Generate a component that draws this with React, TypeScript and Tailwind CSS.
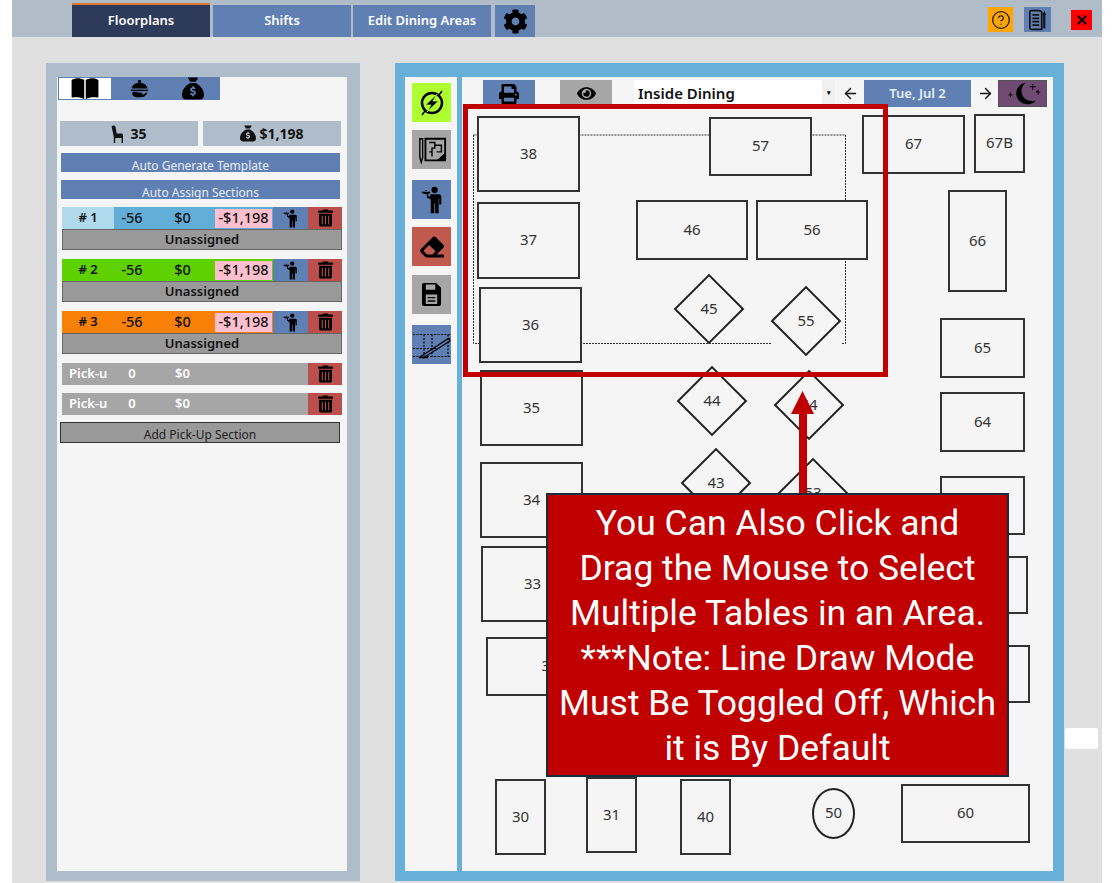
import { ArrowLeft, ArrowRight, CircleHelp, X } from "lucide-react"
import { FaCog, FaEraser, FaEye, FaPrint, FaTrashAlt } from "react-icons/fa"
import { FaSackDollar } from "react-icons/fa6"

const WaiterIcon = ({ className }: { className?: string }) => (
    <svg viewBox="0 0 24 32" className={className} fill="currentColor">
        <circle cx="15" cy="4.5" r="3.6" />
        <path d="M10 9.5h10c1.6 0 2.6 1.2 2.6 2.8V21h-2.4v-7h-.6v17h-4v-11h-1v11h-4V15.5L6 13.2l1-2.2 3 1.3z" />
        <path d="M0 6.5h10c0 1.6-1.4 2.6-2.6 2.8L8 12H6.4l-.2-2.7C3 9.6.4 8.4 0 6.5zM3.6 5.5a1.6 1.6 0 0 1 3 0z" />
    </svg>
)

const BookIcon = () => (
    <svg viewBox="0 0 28 24" className="h-[23px] w-[28px]" fill="currentColor">
        <path d="M1 2.5C4.5 .6 9 .8 13.2 2.8V23C9.5 21 5 20.6 1 21.5c-.6 0-1-.4-1-1V3.4c0-.4.4-.7 1-.9z" />
        <path d="M27 2.5C23.5 .6 19 .8 14.8 2.8V23c3.7-2 8.2-2.4 12.2-1.5.6 0 1-.4 1-1V3.4c0-.4-.4-.7-1-.9z" />
    </svg>
)

const DishIcon = () => (
    <svg viewBox="0 0 24 24" className="h-[19px] w-[19px]" fill="currentColor">
        <circle cx="12" cy="3" r="2" />
        <path d="M2 12C2.6 7.6 6.5 4.6 12 4.6s9.4 3 10 7.4z" />
        <path d="M1 13.5h22v1.8H1z" />
        <path d="M3 17c3-1.2 5-.8 7 .2l5 .2c1 .2 1 1.6 0 1.8l-3 .2 5 .2 4-2.4c.8 0 1 .8.6 1.4C19.4 21.6 17 23 14 23H8c-2 0-3.4-1.6-5-2.4z" />
    </svg>
)

const ChairIcon = ({ className }: { className?: string }) => (
    <svg viewBox="0 0 12 18" className={className} fill="currentColor">
        <path d="M.6 1.500C2 .2 3.500 .2 4.400 1.400L5.700 8.500H10.500C11.400 8.500 12 9.100 12 10V18H10.600V13H4.200V18H2.800V11.800z" />
    </svg>
)

const BoltIcon = () => (
    <svg viewBox="0 0 32 32" className="h-[32px] w-[32px]" fill="none" stroke="currentColor">
        <circle cx="16" cy="16" r="10" strokeWidth="2.500" />
        <path d="M6 28 9 24M23 8 26 4" strokeWidth="1.500" />
        <path d="M21 7 9.500 18H15L11 25 22.500 14H17z" fill="currentColor" stroke="#adff2f" strokeWidth="0.800" />
    </svg>
)

const PlanIcon = () => (
    <svg viewBox="0 0 32 32" className="h-[30px] w-[30px]" fill="none" stroke="currentColor" strokeWidth="2">
        <path d="M3 4v20l1.500 5L6 24V4z" strokeWidth="1.500" />
        <path d="M9 4h21v23H9z" />
        <path d="M13 8h6v6h-3v9M19 11h7v7h-5M13 18h3" strokeWidth="1.500" />
        <path d="M30 19v8H21z" fill="currentColor" stroke="none" />
    </svg>
)

const SaveIcon = () => (
    <svg viewBox="0 0 20 24" className="h-[23px] w-[19px]" fill="currentColor" fillRule="evenodd">
        <path d="M2 0H15L20 5V22C20 23.200 19.200 24 18 24H2C.8 24 0 23.200 0 22V2C0 .8 .8 0 2 0ZM4 1.500V7H14V1.500ZM4 12V22H16V12Z" />
        <path d="M6 14.500H14V16H6ZM6 18H14V19.500H6Z" />
    </svg>
)

const LineDrawIcon = () => (
    <svg viewBox="0 0 39 39" className="h-[39px] w-[39px]" fill="none" stroke="currentColor">
        <path d="M1 9.500H38M1 23.500H24M1 31.500H38M12 9.500V31.500M20 9.500V31.500M36 9.500V31.500" strokeWidth="1.200" strokeDasharray="2 1.500" />
        <path d="M8 32 37 13M11 33 38 16M37 13 38 16" strokeWidth="1.300" />
        <path d="M7 32.500H16" strokeWidth="1.500" />
    </svg>
)

const DocIcon = () => (
    <svg viewBox="0 0 24 26" className="h-[22px] w-[21px]" fill="none" stroke="currentColor" strokeWidth="2">
        <path d="M17 3.500C16 2 15 2 14 2H4.500C3.500 2 3 2.500 3 3.500v19c0 1 .5 1.500 1.500 1.500H17z" />
        <path d="M6 7h8M6 11h8M6 15h8M6 19h8" />
        <path d="M20 23V6" strokeWidth="2.500" />
        <path d="M17.500 7 20 2.500 22.500 7z" fill="currentColor" stroke="none" />
    </svg>
)

const MoonIcon = () => (
    <svg viewBox="0 0 50 28" className="h-[25px] w-[47px]" fill="currentColor">
        <path d="M29 2C22 3 18 8 18 14c0 7 6 12 13 12 4 0 7-1.500 9-4-8 2-15-2-16-9-.6-5 1.500-9 5-11z" />
        <path d="M36 3h1v3h3v1h-3v3h-1V7h-3V6h3zM42 10h1v2h2v1h-2v2h-1v-2h-2v-2h2zM11 13h1v2h2v1h-2v2h-1v-2H9v-1h2z" />
    </svg>
)

type Section = { id: string; light: string; main: string }

const sections: Section[] = [
    { id: "# 1", light: "bg-[#b1d9ee]", main: "bg-[#63aed8]" },
    { id: "# 2", light: "bg-[#5fd000]", main: "bg-[#5fd000]" },
    { id: "# 3", light: "bg-[#f98006]", main: "bg-[#f98006]" },
]

const rects = [
    { label: "38", box: "left-[15px] top-[39px] w-[103px] h-[76px]" },
    { label: "37", box: "left-[15px] top-[125px] w-[103px] h-[77px]" },
    { label: "36", box: "left-[17px] top-[210px] w-[103px] h-[76px]" },
    { label: "57", box: "left-[247px] top-[40px] w-[103px] h-[59px]" },
    { label: "46", box: "left-[174px] top-[123px] w-[112px] h-[60px]" },
    { label: "56", box: "left-[294px] top-[123px] w-[112px] h-[60px]" },
    { label: "67", box: "left-[400px] top-[38px] w-[103px] h-[59px]" },
    { label: "67B", box: "left-[512px] top-[37px] w-[51px] h-[59px]" },
    { label: "66", box: "left-[486px] top-[113px] w-[59px] h-[102px]" },
    { label: "65", box: "left-[478px] top-[241px] w-[85px] h-[60px]" },
    { label: "64", box: "left-[478px] top-[315px] w-[85px] h-[60px]" },
    { label: "35", box: "left-[18px] top-[293px] w-[103px] h-[76px]" },
    { label: "34", box: "left-[18px] top-[385px] w-[103px] h-[76px]" },
    { label: "33", box: "left-[19px] top-[469px] w-[103px] h-[76px]" },
    { label: "32", box: "left-[24px] top-[560px] w-[128px] h-[59px]" },
    { label: "63", box: "left-[478px] top-[399px] w-[85px] h-[59px]" },
    { label: "62", box: "left-[480px] top-[479px] w-[86px] h-[58px]" },
    { label: "61", box: "left-[482px] top-[568px] w-[86px] h-[58px]" },
    { label: "30", box: "left-[33px] top-[702px] w-[51px] h-[76px]" },
    { label: "31", box: "left-[124px] top-[700px] w-[51px] h-[76px]" },
    { label: "40", box: "left-[218px] top-[702px] w-[51px] h-[76px]" },
    { label: "60", box: "left-[439px] top-[707px] w-[129px] h-[59px]" },
]

const diamonds = [
    { label: "45", box: "left-[212px] top-[197px]" },
    { label: "55", box: "left-[309px] top-[209px]" },
    { label: "44", box: "left-[215px] top-[289px]" },
    { label: "54", box: "left-[312px] top-[293px]" },
    { label: "43", box: "left-[219px] top-[371px]" },
    { label: "53", box: "left-[316px] top-[381px]" },
]

const TrashCell = () => (
    <div className="flex h-full w-[34px] items-center justify-center bg-[#bb4f4b] text-black">
        <FaTrashAlt className="h-[18px] w-[15px]" />
    </div>
)

const SectionRow = ({ section }: { section: Section }) => (
    <div className="mx-[5px]">
        <div className={`flex h-[22px] items-center text-[14.500px] font-medium text-[#111] ${section.main}`}>
            <div className={`flex h-full w-[52px] items-center justify-center text-[13px] font-semibold ${section.light}`}>{section.id}</div>
            <div className="w-[36px] text-center">-56</div>
            <div className="w-[65px] text-center">$0</div>
            <div className="flex h-[19px] w-[57px] items-center justify-center bg-[#ffbfcf]">-$1,198</div>
            <div className="w-px" />
            <div className="flex h-full w-[35px] items-center justify-center bg-[#5f80b5] text-black">
                <WaiterIcon className="h-[19px] w-[15px]" />
            </div>
            <TrashCell />
        </div>
        <div className="flex h-[21px] items-center justify-center border border-[#666] bg-[#999] text-[13px] font-semibold text-[#111]">
            Unassigned
        </div>
    </div>
)

const PickupRow = () => (
    <div className="mx-[5px] flex h-[22px] items-center bg-[#a6a6a6] text-[13px] font-semibold text-white">
        <div className="w-[52px] pl-[7px]">Pick-u</div>
        <div className="w-[36px] text-center">0</div>
        <div className="w-[65px] text-center">$0</div>
        <div className="flex-1" />
        <TrashCell />
    </div>
)

const SideButton = ({ color, mt, children }: { color: string; mt: string; children: React.ReactNode }) => (
    <div className={`flex h-[39px] w-[39px] items-center justify-center text-black ${color} ${mt}`}>{children}</div>
)

export default function App() {
    return (
        <div className="h-[883px] w-[1114px] overflow-hidden bg-white px-[12px] font-['Noto_Sans',sans-serif]">
            <div className="flex h-full flex-col bg-[#e0e0e0]">
                {/* Top nav */}
                <div className="flex h-[37px] items-end bg-[#b0bcc8] pl-[60px]">
                    <div className="flex h-[34px] w-[138px] items-center justify-center border-t-2 border-[#e2762e] bg-[#2e3a59] text-[13px] font-semibold text-white">
                        Floorplans
                    </div>
                    <div className="ml-[3px] flex h-[32px] w-[138px] items-center justify-center bg-[#6080b4] text-[13px] font-semibold text-white">
                        Shifts
                    </div>
                    <div className="ml-[2px] flex h-[32px] w-[138px] items-center justify-center bg-[#6080b4] text-[13px] font-semibold text-white">
                        Edit Dining Areas
                    </div>
                    <div className="ml-[4px] flex h-[32px] w-[40px] items-center justify-center bg-[#6080b4] text-black">
                        <FaCog className="h-[25px] w-[25px]" />
                    </div>
                    <div className="mb-[5px] ml-[453px] flex h-[25px] w-[25px] items-center justify-center bg-[#ffa500] text-[#222]">
                        <CircleHelp className="h-[20px] w-[20px]" strokeWidth={1.6} />
                    </div>
                    <div className="mb-[5px] ml-[11px] flex h-[25px] w-[27px] items-center justify-center bg-[#6080b4] text-[#111]">
                        <DocIcon />
                    </div>
                    <div className="mb-[7px] ml-[20px] flex h-[20px] w-[21px] items-center justify-center bg-[#ff0000] text-[#111]">
                        <X className="h-[14px] w-[14px]" strokeWidth={4} />
                    </div>
                </div>

                <div className="flex pl-[34px] pt-[26px]">
                    {/* Left panel */}
                    <div className="h-[818px] w-[314px] bg-[#afbcc9] pb-[10px] pl-[11px] pr-[13px] pt-[14px]">
                        <div className="h-full bg-[#f5f5f5]">
                            <div className="flex h-[23px] pl-px text-black">
                                <div className="flex w-[54px] items-center justify-center border border-[#6080b4] bg-white">
                                    <BookIcon />
                                </div>
                                <div className="flex w-[54px] items-center justify-center bg-[#6080b4]">
                                    <DishIcon />
                                </div>
                                <div className="flex w-[54px] items-center justify-center bg-[#6080b4]">
                                    <FaSackDollar className="h-[23px] w-[22px]" />
                                </div>
                            </div>

                            <div className="ml-[3px] mr-[6px] mt-[21px] flex gap-[5px] text-[14px] font-bold text-[#111]">
                                <div className="flex h-[25px] flex-1 items-center justify-center gap-[7px] bg-[#afbcc9]">
                                    <ChairIcon className="h-[18px] w-[12px]" />
                                    35
                                </div>
                                <div className="flex h-[25px] flex-1 items-center justify-center gap-[3px] bg-[#afbcc9]">
                                    <FaSackDollar className="h-[17px] w-[16px]" />
                                    $1,198
                                </div>
                            </div>

                            <div className="ml-[4px] mr-[7px] mt-[7px] h-[19px] overflow-hidden bg-[#6080b4] pt-[4px] text-center text-[12px] leading-[18px] text-[#e8eef8]">
                                Auto Generate Template
                            </div>
                            <div className="ml-[4px] mr-[7px] mt-[8px] h-[19px] overflow-hidden bg-[#6080b4] pt-[4px] text-center text-[12px] leading-[18px] text-[#e8eef8]">
                                Auto Assign Sections
                            </div>

                            <div className="mt-[8px] flex flex-col gap-[9px]">
                                {sections.map((section) => (
                                    <SectionRow key={section.id} section={section} />
                                ))}
                            </div>

                            <div className="mt-[9px] flex flex-col gap-[8px]">
                                <PickupRow />
                                <PickupRow />
                            </div>

                            <div className="ml-[3px] mr-[7px] mt-[7px] h-[21px] overflow-hidden border border-[#333] bg-[#999] pt-[3px] text-center text-[12px] leading-[18px] text-[#222]">
                                Add Pick-Up Section
                            </div>
                        </div>
                    </div>

                    {/* Right panel */}
                    <div className="ml-[35px] flex h-[818px] w-[669px] gap-[5px] bg-[#69b0d9] pb-[10px] pl-[10px] pr-[11px] pt-[14px]">
                        <div className="flex w-[52px] flex-col items-center bg-[#f5f5f5] pl-px pt-[6px]">
                            <SideButton color="bg-[#adff2f]" mt="">
                                <BoltIcon />
                            </SideButton>
                            <SideButton color="bg-[#a6a6a6]" mt="mt-[8px]">
                                <PlanIcon />
                            </SideButton>
                            <SideButton color="bg-[#6080b4]" mt="mt-[11px]">
                                <WaiterIcon className="h-[28px] w-[22px]" />
                            </SideButton>
                            <SideButton color="bg-[#c0594e]" mt="mt-[8px]">
                                <FaEraser className="h-[24px] w-[24px]" />
                            </SideButton>
                            <SideButton color="bg-[#a6a6a6]" mt="mt-[9px]">
                                <SaveIcon />
                            </SideButton>
                            <SideButton color="bg-[#6080b4]" mt="mt-[11px]">
                                <LineDrawIcon />
                            </SideButton>
                        </div>

                        <div className="relative flex-1 bg-[#f5f5f5]">
                            {/* Toolbar */}
                            <div className="flex items-start pl-[21px] pt-[3px]">
                                <div className="flex h-[27px] w-[52px] items-center justify-center bg-[#6080b4] text-black">
                                    <FaPrint className="h-[20px] w-[20px]" />
                                </div>
                                <div className="ml-[25px] flex h-[27px] w-[52px] items-center justify-center bg-[#a6a6a6] text-black">
                                    <FaEye className="h-[19px] w-[19px]" />
                                </div>
                                <div className="ml-[22px] flex h-[27px] w-[201px] items-center justify-between bg-white pl-[4px] text-[15px] font-semibold text-[#111]">
                                    Inside Dining
                                    <span className="flex h-full w-[13px] items-center justify-center bg-[#f0f0f0] text-[7px]">▾</span>
                                </div>
                                <ArrowLeft className="ml-[7px] mt-[5px] h-[17px] w-[17px] text-[#111]" strokeWidth={2} />
                                <div className="ml-[5px] flex h-[27px] w-[107px] items-center justify-center bg-[#6080b4] text-[13px] font-semibold text-[#e8eef8]">
                                    Tue, Jul 2
                                </div>
                                <ArrowRight className="ml-[6px] mt-[5px] h-[17px] w-[17px] text-[#111]" strokeWidth={2} />
                                <div className="ml-[4px] border border-[#555] bg-[#6f4a72] text-black">
                                    <MoonIcon />
                                </div>
                            </div>

                            {/* Dashed line draw */}
                            <svg className="absolute left-0 top-0 h-[794px] w-[591px]" fill="none" stroke="#333" strokeDasharray="2 1">
                                <path d="M11.500 58V266.500H310M380 266.500H383.500V58H11.500" />
                            </svg>

                            {rects.map((table) => (
                                <div
                                    key={table.label}
                                    className={`absolute flex items-center justify-center border-2 border-[#333] bg-[#f5f5f5] pb-[2px] text-[15px] text-[#333] ${table.box}`}
                                >
                                    {table.label}
                                </div>
                            ))}

                            <div className="absolute left-[350px] top-[711px] flex h-[51px] w-[43px] items-center justify-center rounded-[50%] border-2 border-[#222] pb-[2px] text-[15px] text-[#333]">
                                50
                            </div>

                            {diamonds.map((table) => (
                                <div
                                    key={table.label}
                                    className={`absolute flex h-[70px] w-[70px] items-center justify-center pb-[2px] text-[15px] text-[#333] ${table.box}`}
                                >
                                    <div className="absolute left-[10px] top-[10px] h-[50px] w-[50px] rotate-45 border-2 border-[#222]" />
                                    <span className="relative">{table.label}</span>
                                </div>
                            ))}

                            {/* Callout overlay */}
                            <div className="absolute left-px top-[27px] h-[273px] w-[425px] border-[5px] border-[#c00000]" />
                            <svg className="absolute left-[329px] top-[314px] h-[102px] w-[23px]" viewBox="0 0 23 102" fill="#c00000">
                                <path d="M11.500 0 23 23H16V102H8V23H0z" />
                            </svg>
                            <div className="absolute left-[84px] top-[416px] flex h-[284px] w-[463px] flex-col items-center justify-center border-2 border-[#1c2b3a] bg-[#c00000] pt-[2px] text-center font-['Roboto',sans-serif] text-[35.500px] leading-[45px] text-white">
                                <span>You Can Also Click and</span>
                                <span>Drag the Mouse to Select</span>
                                <span>Multiple Tables in an Area.</span>
                                <span>***Note: Line Draw Mode</span>
                                <span>Must Be Toggled Off, Which</span>
                                <span>it is By Default</span>
                            </div>

                            {/* Small white tab outside the panel */}
                            <div className="absolute left-[603px] top-[651px] h-[21px] w-[33px] rounded-[3px] bg-white" />
                        </div>
                    </div>
                </div>
            </div>
        </div>
    )
}
